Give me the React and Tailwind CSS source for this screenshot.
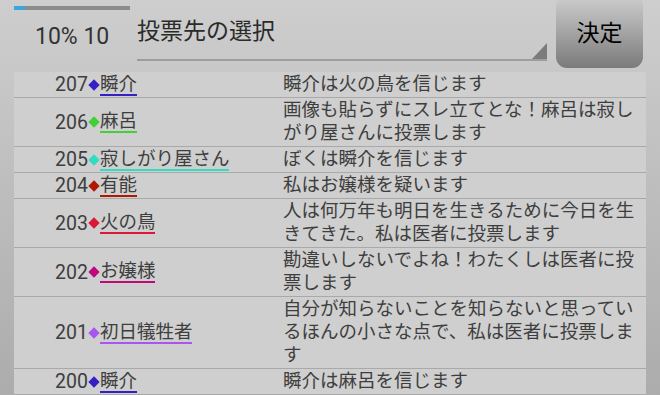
import React from 'react';

const rows = [
  { no: 207, name: '瞬介', color: '#3421c4', text: '瞬介は火の鳥を信じます' },
  { no: 206, name: '麻呂', color: '#43cf38', text: '画像も貼らずにスレ立てとな！麻呂は寂しがり屋さんに投票します' },
  { no: 205, name: '寂しがり屋さん', color: '#31dcc0', text: 'ぼくは瞬介を信じます' },
  { no: 204, name: '有能', color: '#b01800', text: '私はお嬢様を疑います' },
  { no: 203, name: '火の鳥', color: '#dc1838', text: '人は何万年も明日を生きるために今日を生きてきた。私は医者に投票します' },
  { no: 202, name: 'お嬢様', color: '#bc0a7c', text: '勘違いしないでよね！わたくしは医者に投票します' },
  { no: 201, name: '初日犠牲者', color: '#a955f0', text: '自分が知らないことを知らないと思っているほんの小さな点で、私は医者に投票します' },
  { no: 200, name: '瞬介', color: '#3421c4', text: '瞬介は麻呂を信じます' },
];

const LogRow = ({ row }) => (
  <div className="flex border-b border-[#a9a9a9]">
    <div className="w-[269px] shrink-0 flex items-center pl-[41px]">
      <span className="text-[19.5px]">{row.no}</span>
      <span
        className="inline-block w-[8px] h-[8px] rotate-45 mx-[2px]"
        style={{ backgroundColor: row.color }}
      />
      <span
        className="inline-block leading-[20px] border-b-2"
        style={{ borderColor: row.color }}
      >
        {row.name}
      </span>
    </div>
    <div className="flex-1 py-[1px]">{row.text}</div>
  </div>
);

const App = () => {
  return (
    <div
      className="w-[660px] h-[395px] overflow-hidden bg-gradient-to-b from-[#cecece] to-[#acacac] flex flex-col"
      style={{ fontFamily: 'Roboto, "Noto Sans CJK JP", sans-serif' }}
    >
      <div className="flex h-[72px] shrink-0">
        <div className="w-[137px] shrink-0 pl-[14px]">
          <div className="mt-[6px] h-[4px] w-[116px] bg-[#8c8c8c]">
            <div className="h-full w-[11px] bg-[#3ba6de]" />
          </div>
          <div className="mt-[12px] pl-[21px] text-[23px] leading-[30px] text-[#333333]">10% 10</div>
        </div>
        <div className="relative w-[410px] h-[61px] border-b-2 border-[#9d9d9d]">
          <div className="mt-[17px] text-[23px] leading-[30px] text-[#2a2a2a]">投票先の選択</div>
          <svg className="absolute right-0 bottom-0" width="15" height="16" viewBox="0 0 15 16">
            <polygon points="15,0 15,16 0,16" fill="#7b7b7b" />
          </svg>
        </div>
        <button className="ml-[9px] -mt-[6px] w-[87px] h-[74px] rounded-[11px] bg-gradient-to-b from-[#d0d0d0] via-[#a6a6a6] to-[#7a7a7a] flex items-center justify-center pt-[6px] text-[23px] text-black">
          決定
        </button>
      </div>
      <div className="mx-[14px] bg-[#cfcfcf] text-[18.5px] leading-[23px] text-[#3e3e3e]">
        {rows.map((row) => (
          <LogRow key={row.no + row.name} row={row} />
        ))}
      </div>
    </div>
  );
};

export default App;
